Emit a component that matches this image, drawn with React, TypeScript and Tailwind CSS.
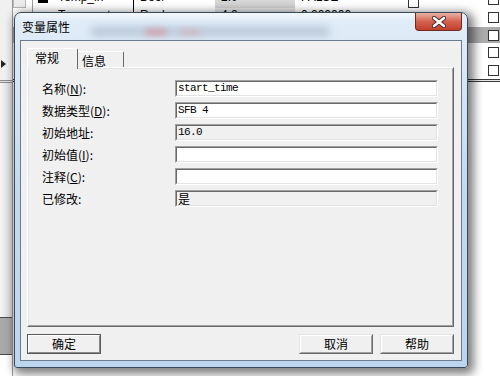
import type { ReactNode } from "react";

type Row = {
  label: string;
  hot?: string;
  value: string;
  readOnly?: boolean;
  mono?: boolean;
};

const rows: Row[] = [
  { label: "名称", hot: "N", value: "start_time", mono: true },
  { label: "数据类型", hot: "D", value: "SFB 4", mono: true },
  { label: "初始地址", value: "16.0", readOnly: true, mono: true },
  { label: "初始值", hot: "I", value: "" },
  { label: "注释", hot: "C", value: "" },
  { label: "已修改", value: "是", readOnly: true },
];

// background table rows peeking out behind the dialog
const bgRows = [
  { h: "h-[18px] -mt-[10px]", name: "Temp_in", type: "Bool", addr: "2.0", init: "FALSE", bg: "bg-white" },
  { h: "h-[19px]", name: "Temp_out", type: "Real", addr: "4.0", init: "0.000000", bg: "bg-white" },
  { h: "h-[16px]", name: "", type: "", addr: "", init: "", bg: "bg-[#ababab]" },
  { h: "h-[18px]", name: "", type: "", addr: "", init: "", bg: "bg-white" },
  { h: "h-[18px]", name: "", type: "", addr: "", init: "", bg: "bg-white" },
];

function Field({ row }: { row: Row }) {
  return (
    <div className="h-[17px] w-[263px] border border-t-[#a0a0a0] border-l-[#a0a0a0] border-r-white border-b-white">
      <div
        className={`flex h-full items-center border border-t-[#696969] border-l-[#696969] border-r-[#e3e3e3] border-b-[#e3e3e3] pl-[1px] ${
          row.readOnly ? "bg-[#f0f0f0]" : "bg-white"
        }`}
      >
        <span
          className={
            row.mono
              ? "font-['Liberation_Mono',monospace] text-[11px] leading-none tracking-[-0.6px] text-black"
              : "text-[12px] leading-none text-black"
          }
        >
          {row.value}
        </span>
      </div>
    </div>
  );
}

function Button({ children, def }: { children: ReactNode; def?: boolean }) {
  if (def) {
    return (
      <div className="h-[20px] w-[74px] border border-[#5a5a5a]">
        <div className="flex h-full items-center justify-center border border-t-white border-l-white border-r-[#8a8a8a] border-b-[#8a8a8a] bg-[#f0f0f0] text-[12px] leading-none">
          {children}
        </div>
      </div>
    );
  }
  return (
    <div className="h-[20px] w-[74px] border border-t-[#e3e3e3] border-l-[#e3e3e3] border-r-[#696969] border-b-[#696969]">
      <div className="flex h-full items-center justify-center border border-t-white border-l-white border-r-[#a0a0a0] border-b-[#a0a0a0] bg-[#f0f0f0] text-[12px] leading-none">
        {children}
      </div>
    </div>
  );
}

function Check() {
  return <div className="h-[11px] w-[11px] border border-[#333] bg-white" />;
}

export default function App() {
  return (
    <div className="relative h-[376px] w-[500px] overflow-hidden bg-white font-['Noto_Sans_CJK_SC','Liberation_Sans',sans-serif] text-black">
      {/* the application behind the dialog */}
      <div className="flex h-full">
        <div className="flex w-[13px] shrink-0 flex-col border-r border-[#9a9a9a]">
          <div className="flex h-[80px] items-start bg-[#f0f0f0] pl-[1px] pt-[60px]">
            <svg width="5" height="8" viewBox="0 0 5 8">
              <polygon points="0,0 5,4 0,8" fill="#222" />
            </svg>
          </div>
          <div className="h-[3px] border-y border-[#8c8c8c] bg-[#e0e0e0]" />
          <div className="h-[234px] bg-gradient-to-r from-[#f6f6f6] to-[#d8d8d8]" />
          <div className="h-[38px] border-y border-[#4a4a4a] bg-[#a9a9a9]" />
          <div className="flex-1 bg-white" />
        </div>

        <div className="flex flex-1 flex-col font-['Liberation_Sans',sans-serif] text-[12px] leading-[14px]">
          {bgRows.map((r, i) => (
            <div key={i} className={`flex items-start ${r.h} ${r.bg}`}>
              <div className="flex h-full w-[20px] items-end border-r border-[#9a9a9a]">
                {i === 0 && <div className="h-[10px] w-[13px] border border-[#b5b5b5] bg-[#ededed]" />}
              </div>
              <div className="flex h-full w-[101px] items-start gap-[10px] border-r border-black pl-[5px]">
                {i === 0 && <div className="mt-[10px] h-[3px] w-[10px] bg-black" />}
                <span className={i === 0 ? "" : "pl-[20px]"}>{r.name}</span>
              </div>
              <div className="h-full w-[81px] pl-[6px]">{r.type}</div>
              <div className="h-full w-[80px] bg-gradient-to-b from-[#e4e4e4] to-[#cfcfcf] pl-[6px]">{r.addr}</div>
              <div className="h-full w-[113px] pl-[6px]">{r.init}</div>
              <div className="flex h-full w-[80px] items-end">{i === 0 && <Check />}</div>
              <div className="flex h-full flex-1 items-center">
                <Check />
              </div>
            </div>
          ))}
          <div className="h-[3px] border-y border-[#3a3a3a] bg-[#e8e8e8]" />
          <div className="flex-1 bg-white" />
        </div>
      </div>

      {/* dialog window */}
      <div className="absolute left-[14px] top-[12px] flex h-[356px] w-[454px] flex-col rounded-t-[7px] rounded-b-[3px] border border-[#3b4a5b] bg-gradient-to-b from-[#e2edf8] via-[#c4d9ee] to-[#bcd5ee] px-[5px] pb-[6px] shadow-[3px_3px_10px_3px_rgba(0,0,0,0.5)]">
        <div className="relative flex h-[27px] shrink-0 items-center overflow-hidden pl-[2px]">
          <div className="absolute left-[70px] top-[14px] h-[9px] w-[240px] rounded-full bg-[#9aabbd] opacity-60 blur-[4px]" />
          <div className="absolute left-[125px] top-[16px] h-[6px] w-[22px] rounded-full bg-[#d98a95] opacity-70 blur-[3px]" />
          <div className="absolute left-[160px] top-[17px] h-[5px] w-[20px] rounded-full bg-[#e0a0a8] opacity-60 blur-[3px]" />
          <div className="absolute left-[0px] top-[0px] h-[8px] w-full bg-gradient-to-b from-white/60 to-transparent" />
          <span className="relative text-[12px] leading-none">变量属性</span>
          <div className="absolute right-0 top-0 flex h-[18px] w-[47px] items-center justify-center rounded-b-[4px] border border-t-0 border-[#6e2a20] bg-gradient-to-b from-[#eab2a5] via-[#d2624f] to-[#c2402c]">
            <svg width="14" height="12" viewBox="0 0 14 12">
              <path d="M2 2 L12 10 M12 2 L2 10" stroke="#4a2a28" strokeWidth="4.2" strokeLinecap="round" />
              <path d="M2 2 L12 10 M12 2 L2 10" stroke="#ffffff" strokeWidth="2.4" strokeLinecap="round" />
            </svg>
          </div>
        </div>

        <div className="flex flex-1 flex-col border border-[#6b7c8e] bg-[#f0f0f0] pb-[6px] pl-[6px] pr-[7px] pt-[7px]">
          <div className="relative z-10 flex h-[19px] text-[12px] leading-none">
            <div className="h-[21px] w-[51px] rounded-t-[2px] border-l border-t border-r border-l-white border-t-white border-r-[#696969] bg-[#f0f0f0] pl-[7px] pt-[3px]">
              常规
            </div>
            <div className="mt-[3px] h-[16px] w-[46px] rounded-tr-[2px] border-t border-r border-t-white border-r-[#696969] pl-[4px] pt-[3px]">
              信息
            </div>
          </div>

          <div className="h-[260px] border border-t-white border-l-white border-r-[#696969] border-b-[#696969]">
            <div className="flex h-full flex-col gap-[5px] border border-t-[#e3e3e3] border-l-[#e3e3e3] border-r-[#a0a0a0] border-b-[#a0a0a0] pl-[13px] pt-[11px]">
              {rows.map((row) => (
                <div key={row.label} className="flex h-[17px] items-center">
                  <div className="w-[133px] text-[12px] leading-none">
                    {row.label}
                    {row.hot && (
                      <>
                        (<span className="underline">{row.hot}</span>)
                      </>
                    )}
                    :
                  </div>
                  <Field row={row} />
                </div>
              ))}
            </div>
          </div>

          <div className="mt-[7px] flex justify-between">
            <Button def>确定</Button>
            <div className="flex gap-[7px]">
              <Button>取消</Button>
              <Button>帮助</Button>
            </div>
          </div>
        </div>
      </div>
    </div>
  );
}
